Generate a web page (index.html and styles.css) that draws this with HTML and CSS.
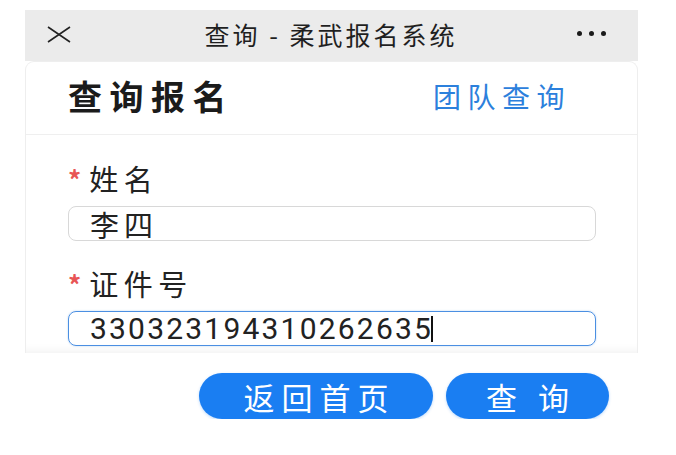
FILE: index.html
```html
<!DOCTYPE html>
<html lang="zh-CN">
<head>
<meta charset="utf-8">
<title>查询 - 柔武报名系统</title>
<link rel="stylesheet" href="styles.css">
</head>
<body>
<div class="page">
  <div class="topbar">
    <svg class="close" width="24" height="17" viewBox="0 0 24 17" preserveAspectRatio="none">
      <path d="M1 1 L23 16 M23 1 L1 16" stroke="#222" stroke-width="1.6" fill="none"/>
    </svg>
    <div class="title">查询 - 柔武报名系统</div>
    <div class="dots"><span></span><span></span><span></span></div>
  </div>
  <div class="card">
    <div class="card-head">
      <h1 class="heading">查询报名</h1>
      <a class="team-link">团队查询</a>
    </div>
    <div class="form">
      <div class="field">
        <div class="label"><span class="star">*</span>姓名</div>
        <div class="input">李四</div>
      </div>
      <div class="field">
        <div class="label"><span class="star">*</span>证件号</div>
        <div class="input focused"><span class="digits">330323194310262635</span><span class="caret"></span></div>
      </div>
    </div>
  </div>
  <div class="actions">
    <button class="btn btn-home">返回首页</button>
    <button class="btn btn-query">查 询</button>
  </div>
</div>
</body>
</html>
```

FILE: styles.css
```css
html, body {
  margin: 0;
  padding: 0;
  background: #ffffff;
}
body {
  font-family: "Noto Sans CJK SC", "Noto Sans", sans-serif;
  color: #222;
}
.page {
  width: 613px;
  margin-left: 25px;
  padding-top: 10px;
}
.topbar {
  height: 51px;
  background: #ebebeb;
  display: flex;
  align-items: center;
  padding: 0 32px 0 22px;
}
.close {
  display: block;
  margin-top: -2px;
}
.title {
  flex: 1;
  text-align: center;
  font-size: 25px;
  letter-spacing: 3px;
  color: #1f1f1f;
  padding-left: 14px;
  margin-top: -4px;
}
.dots {
  display: flex;
  gap: 7px;
  margin-top: -4px;
}
.dots span {
  width: 5px;
  height: 5px;
  border-radius: 50%;
  background: #1a1a1a;
}
.card {
  height: 291px;
  border: 1px solid #eeeeee;
  border-bottom: none;
  border-radius: 9px 9px 0 0;
  background: #fff;
  box-shadow: inset 0 -10px 10px -8px rgba(0,0,0,0.06);
}
.card-head {
  height: 72px;
  border-bottom: 1px solid #efefef;
  display: flex;
  align-items: center;
  justify-content: space-between;
  padding: 0 66px 0 42px;
}
.heading {
  margin: 0 0 6px;
  font-size: 34px;
  font-weight: 700;
  letter-spacing: 7.5px;
  color: #1b1b1b;
}
.team-link {
  font-size: 28px;
  letter-spacing: 6.5px;
  color: #2c80dc;
  margin-bottom: 4px;
}
.form {
  padding: 23px 41px 0 42px;
  display: flex;
  flex-direction: column;
  gap: 22px;
}
.field {
  display: flex;
  flex-direction: column;
  gap: 8px;
}
.label {
  font-size: 29px;
  line-height: 38px;
  letter-spacing: 5.5px;
  display: flex;
  align-items: center;
}
.star {
  color: #e85555;
  font-size: 26px;
  font-weight: 700;
  letter-spacing: 0;
  margin-right: 8px;
  margin-top: 2px;
}
.input {
  height: 33px;
  border: 1px solid #d8d8d8;
  border-radius: 8px;
  display: flex;
  align-items: center;
  padding-left: 21px;
  font-size: 29px;
  letter-spacing: 5px;
  color: #222;
}
.input.focused {
  border-color: #4b8fe2;
  box-shadow: 0 0 2px rgba(75,143,226,0.4);
}
.digits {
  font-family: "Roboto", "Noto Sans", sans-serif;
  font-size: 30px;
  letter-spacing: 2.2px;
}
.caret {
  width: 1.5px;
  height: 26px;
  background: #111;
  margin-left: -2px;
}
.actions {
  display: flex;
  justify-content: flex-end;
  gap: 13px;
  padding: 20px 29px 0 0;
}
.btn {
  border: none;
  height: 46px;
  border-radius: 23px;
  background: #1a7ef2;
  color: #fff;
  font-family: "Noto Sans CJK SC", sans-serif;
  font-size: 31px;
  letter-spacing: 7px;
  padding: 0 0 0 7px;
  box-shadow: 0 1px 3px rgba(26,126,242,0.3);
}
.btn-home {
  width: 234px;
}
.btn-query {
  width: 163px;
}
```
